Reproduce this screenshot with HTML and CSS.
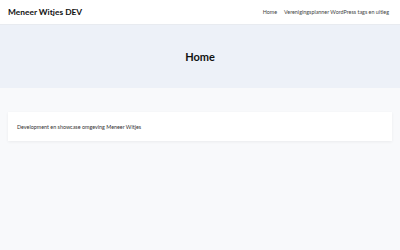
FILE: index.html
```html
<!DOCTYPE html>
<html lang="nl">
<head>
  <meta charset="UTF-8" />
  <meta name="viewport" content="width=device-width, initial-scale=1.0" />
  <title>Meneer Witjes DEV</title>
  <link rel="stylesheet" href="styles.css">
</head>
<body>
  <header class="site-header">
    <div class="brand">Meneer Witjes DEV</div>
    <nav class="menu">
      <a href="#">Home</a>
      <a href="#">Verenigingsplanner WordPress tags en uitleg</a>
    </nav>
  </header>

  <section class="hero">
    <h1>Home</h1>
  </section>

  <main class="content">
    <div class="card">
      <p>Development en showcase omgeving Meneer Witjes</p>
    </div>
  </main>
</body>
</html>
```

FILE: styles.css
```css
* {
  box-sizing: border-box;
  margin: 0;
  padding: 0;
}

html, body {
  height: 100%;
}

body {
  font-family: Lato, "Noto Sans", sans-serif;
  background: #f8f9fb;
  color: #222;
}

.site-header {
  height: 25px;
  background: #fff;
  border-bottom: 1px solid #e8ebf0;
  display: flex;
  align-items: center;
  justify-content: space-between;
  padding: 0 11px 0 8px;
}

.brand {
  font-size: 8.4px;
  font-weight: 700;
  color: #111;
}

.menu {
  display: flex;
  gap: 7px;
}

.menu a {
  font-size: 5.4px;
  color: #444;
  text-decoration: none;
}

.hero {
  height: 63px;
  background: #edf1f8;
  display: flex;
  align-items: center;
  justify-content: center;
}

.hero h1 {
  font-size: 11px;
  font-weight: 700;
  color: #111;
}

.content {
  padding: 24px 8px;
}

.card {
  background: #fff;
  height: 29px;
  display: flex;
  align-items: center;
  padding: 0 9px;
  box-shadow: 0 1px 3px rgba(0, 0, 0, 0.06);
}

.card p {
  font-size: 5.4px;
  color: #333;
}
```
